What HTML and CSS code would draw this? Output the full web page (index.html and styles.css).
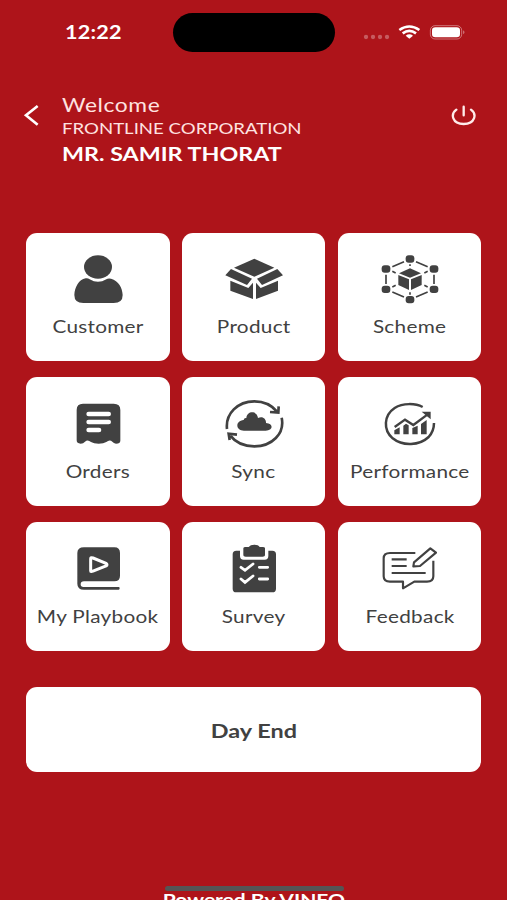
FILE: index.html
```html
<!DOCTYPE html>
<html lang="en">
<head>
<meta charset="utf-8">
<title>Home</title>
<link rel="stylesheet" href="styles.css">
</head>
<body>
<div class="screen">
  <div class="status">
    <div class="time"><span class="wide">12:22</span></div>
    <div class="island"></div>
    <svg class="indicators" viewBox="330 65 320 60">
      <g fill="#fff" opacity=".3"><circle cx="339" cy="110" r="6.5"/><circle cx="360" cy="110" r="6.5"/><circle cx="381" cy="110" r="6.5"/><circle cx="402" cy="110" r="6.5"/></g>
      <g fill="none" stroke="#fff" stroke-width="8"><path d="M439 89Q469 68 499 89"/><path d="M449 99Q469 84 489 99"/></g>
      <path d="M458 106Q469 98 480 106L469 115Z" fill="#fff"/>
      <rect x="532" y="76" width="94" height="40" rx="14" fill="none" stroke="#fff" stroke-width="3" opacity=".4"/>
      <rect x="537" y="81" width="84" height="30" rx="10" fill="#fff"/>
      <path d="M631 90q6 6 0 12z" fill="#fff" opacity=".6"/>
    </svg>
  </div>
  <header class="header">
    <svg class="back" viewBox="70 305 54 78"><path d="M114 317L79 345L114 373" fill="none" stroke="#fff" stroke-width="8"/></svg>
    <div class="who">
      <div class="hello"><span class="wide">Welcome</span></div>
      <div class="company"><span class="wide">FRONTLINE CORPORATION</span></div>
      <div class="name"><span class="wide">MR. SAMIR THORAT</span></div>
    </div>
    <svg class="power" viewBox="590 308 80 72"><path d="M609 328C591 341 596 371 631 371S671 341 653 328M631 319V345" fill="none" stroke="#ffeceb" stroke-width="7" stroke-linecap="round"/></svg>
  </header>
  <main class="grid">
    <div class="card">
      <svg class="icon" viewBox="143 88 180 150"><g fill="#414141"><ellipse cx="233" cy="127" rx="42" ry="35"/><path d="M196 161Q203 160 208 164Q233 179 258 164Q263 160 272 162C295 168 306 190 307 211Q307 235 280 235H189Q162 235 162 211C163 188 175 165 196 161Z"/></g></svg>
      <div class="label"><span class="wide">Customer</span></div>
    </div>
    <div class="card">
      <svg class="icon" viewBox="143 88 180 150"><g fill="#414141"><path d="M234 102L294 129L234 156L173 129Z"/><path d="M164 133L227 162L212 181L147 152Z"/><path d="M303 133L242 162L257 181L320 152Z"/><path d="M162 168L216 190L230 174V223L162 198Z"/><path d="M305 168L253 190L239 174V223L305 198Z"/></g></svg>
      <div class="label"><span class="wide">Product</span></div>
    </div>
    <div class="card">
      <svg class="icon" viewBox="143 88 180 150"><g fill="#414141"><rect x="220" y="92" width="26" height="22" rx="9"/><rect x="148" y="122" width="26" height="22" rx="9"/><rect x="292" y="122" width="26" height="22" rx="9"/><rect x="148" y="183" width="26" height="22" rx="9"/><rect x="292" y="183" width="26" height="22" rx="9"/><rect x="220" y="214" width="26" height="22" rx="9"/><path d="M233 131L266 146L233 159L200 146Z"/><path d="M198 151L230 164V196L198 181Z"/><path d="M268 151L236 164V196L268 181Z"/></g><path d="M180 126L215 111M251 111L286 126M161 150V178M305 150V178M180 202L215 217M251 217L286 202M233 119V124M233 203V210M180 140L190 145M286 140L276 145M180 187L190 182M286 187L276 182" fill="none" stroke="#414141" stroke-width="5"/></svg>
      <div class="label"><span class="wide">Scheme</span></div>
    </div>
    <div class="card">
      <svg class="icon" viewBox="143 88 180 150"><path d="M188 102H280Q300 102 300 121V213Q300 222 287 222Q280 221 276 216Q268 208 258 217Q250 222 235 222Q220 222 212 217Q202 208 194 216Q189 222 181 222Q169 222 169 212V121Q169 102 188 102Z" fill="#414141"/><path d="M205 133H265M205 157H265M205 181H236" stroke="#fff" stroke-width="14" stroke-linecap="round"/></svg>
      <div class="label"><span class="wide">Orders</span></div>
    </div>
    <div class="card">
      <svg class="icon" viewBox="143 88 180 150"><path d="M152 178C147 132 184 95 234 95C264 95 286 106 302 126M281 127L306 129L307 110M316 144C326 192 287 230 234 230C203 230 178 219 162 198M160 211L157 192L182 195" fill="none" stroke="#414141" stroke-width="8"/><path d="M203 183C177 183 176 153 202 151Q203 144 210 145C212 122 243 123 245 145C260 138 270 149 269 160C292 161 291 183 268 183Z" fill="#414141"/></svg>
      <div class="label"><span class="wide">Sync</span></div>
    </div>
    <div class="card">
      <svg class="icon" viewBox="143 88 180 150"><path d="M271 112C250 101 212 99 187 115C154 137 152 181 181 206C212 231 261 228 289 202Q305 184 305 160" fill="none" stroke="#414141" stroke-width="7.5"/><path d="M187 172L218 150L243 166L286 134" fill="none" stroke="#414141" stroke-width="7"/><path fill="#414141" d="M268 126H295V149ZM186 182L202 173V194H186ZM213 168L221 162L229 167V194H213ZM240 175L256 168V194H240ZM266 163L283 151V194H266Z"/></svg>
      <div class="label"><span class="wide">Performance</span></div>
    </div>
    <div class="card">
      <svg class="icon" viewBox="143 88 180 150"><path d="M191 98H282Q299 98 299 115V183Q299 200 282 200H191Q181 200 181 209T191 217H295Q298 217 298 221T295 225H191Q171 225 171 207V115Q171 98 191 98Z" fill="#414141"/><path d="M211 132Q211 127 218 130L257 146Q263 150 257 154L218 169Q211 173 211 168Z" fill="none" stroke="#fff" stroke-width="9"/></svg>
      <div class="label"><span class="wide">My Playbook</span></div>
    </div>
    <div class="card">
      <svg class="icon" viewBox="143 88 180 150"><path d="M180 108H191V124Q191 135 202 135H265Q276 135 276 124V108H288Q299 108 299 119V222Q299 233 288 233H180Q169 233 169 222V119Q169 108 180 108ZM201 101Q201 97 208 97H217Q222 90 234 90T250 97H259Q266 97 266 101V122Q266 126 259 126H208Q201 126 201 122Z" fill="#414141"/><path d="M194 158L206 167L230 148M194 193L206 203L230 184M249 158H274M249 193H274" fill="none" stroke="#fff" stroke-width="8.5" stroke-linecap="round"/></svg>
      <div class="label"><span class="wide">Survey</span></div>
    </div>
    <div class="card">
      <svg class="icon" viewBox="143 88 180 150"><path d="M249 115H173Q154 115 154 131V185Q154 201 173 201H212V221L246 201H284Q303 201 303 185V138M178 134H223M178 154H223M178 175H280M245 143L294 101L311 114L263 154L243 155Z" fill="none" stroke="#414141" stroke-width="6.5" stroke-linejoin="round"/></svg>
      <div class="label"><span class="wide">Feedback</span></div>
    </div>
  </main>
  <div class="day-end"><span class="wide">Day End</span></div>
  <footer class="footer"><span class="wide">Powered By VINFO</span><div class="home-bar"></div></footer>
</div>
</body>
</html>
```
FILE: styles.css
```css
* { box-sizing: border-box; }
body { margin: 0; background: #ae141a; font-family: Lato, "Liberation Sans", sans-serif; }
svg { display: block; flex: none; }
.screen { height: 900px; overflow: hidden; display: flex; flex-direction: column; }
.wide { display: inline-block; white-space: nowrap; transform: scaleX(1.2); }

.status { height: 93px; flex: none; display: flex; align-items: flex-start; color: #fff; }
.time { width: 173px; padding: 21px 0 0 65px; font-size: 18px; line-height: 23px; font-weight: 700; letter-spacing: .2px; }
.time .wide, .who .wide { transform-origin: left; }
.island { width: 162px; height: 39px; margin-top: 12.5px; border-radius: 20px; background: #000; }
.indicators { width: 106.7px; height: 20px; margin: 21.7px 0 0 28px; }

.header { height: 139.5px; flex: none; display: flex; color: #fff; }
.back { width: 18px; height: 26px; margin: 8.7px 0 0 23.3px; }
.who { width: 386px; padding-left: 21.2px; }
.hello { font-size: 19px; line-height: 23px; letter-spacing: .5px; color: #ffe3e1; }
.company { font-size: 15.5px; line-height: 24px; color: #ffe3e1; }
.name { font-size: 19.4px; line-height: 27px; font-weight: 700; }
.power { width: 26.7px; height: 24px; margin: 9.7px 0 0 22.6px; }

.grid { flex: none; display: grid; grid-template-columns: repeat(3, 1fr); grid-auto-rows: 128.7px; gap: 16px 12.6px; margin: 0 25.7px 0 26.3px; }
.card { display: flex; flex-direction: column; align-items: center; background: #fff; border-radius: 11px; padding-top: 21.7px; }
.icon { width: 60px; height: 50px; }
.label { margin-top: 12.1px; font-size: 17.3px; line-height: 22px; font-weight: 400; letter-spacing: .25px; color: #414141; }
.day-end { flex: none; height: 84.5px; margin: 36.8px 25.7px 0 26.3px; padding-top: 1px; display: flex; align-items: center; justify-content: center; border-radius: 11px; background: #fff; color: #414141; font-size: 19.5px; font-weight: 700; }
.footer { position: relative; flex: none; height: 28px; margin-top: 114.2px; text-align: center; color: #fff; font-size: 17.5px; line-height: 28px; font-weight: 700; }
.home-bar { position: absolute; left: 164.5px; top: -.5px; width: 179px; height: 5px; border-radius: 3px; background: #555; }
```
